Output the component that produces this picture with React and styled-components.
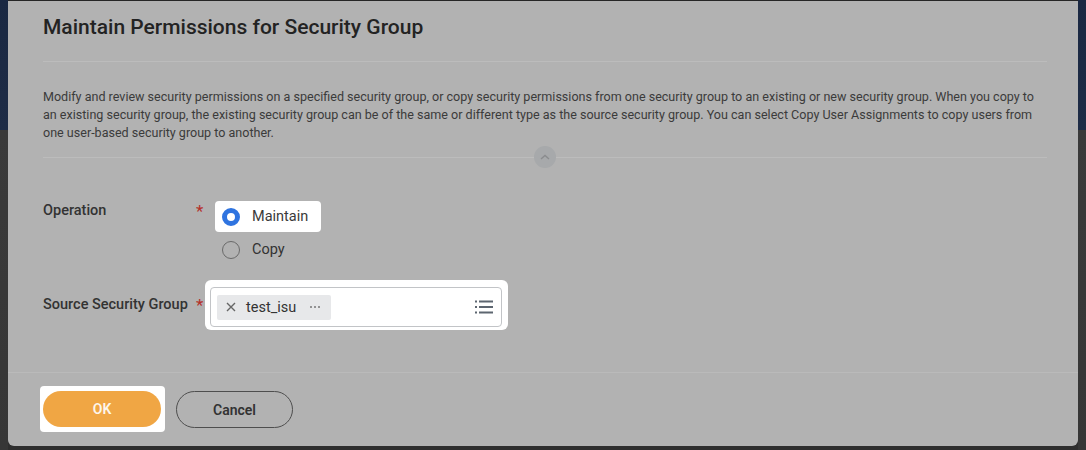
import React from 'react';
import styled, {createGlobalStyle} from "styled-components";

const GlobalStyle = createGlobalStyle`
  html, body {
    margin: 0;
    padding: 0;
    background: #2f2f2f;
  }
  body {
    font-family: Roboto, "Liberation Sans", sans-serif;
  }
`;

const Frame = styled.div`
  display: flex;
  width: 1086px;
  height: 450px;
  background: #2e2e2e;
  overflow: hidden;
`;

const Side = styled.div`
  width: ${p => p.w}px;
  flex-shrink: 0;
  background: linear-gradient(#1a2842 0, #1e2c46 130px, #3a3a3a 130px, #363636 100%);
`;

const Panel = styled.div`
  flex: 1;
  height: 446px;
  display: flex;
  flex-direction: column;
  background: #b2b2b2;
  border-top: 1px solid #262626;
  border-radius: 0 0 6px 6px;
  box-sizing: border-box;
`;

const Body = styled.div`
  flex: 1;
  padding: 0 31px 0 35px;
`;

const Header = styled.div`
  height: 61px;
  padding-top: 14px;
  box-sizing: border-box;
  border-bottom: 1px solid #bcbcbc;
`;

const Title = styled.h1`
  margin: 0;
  font-size: 21px;
  line-height: 24px;
  font-weight: 500;
  color: #232323;
`;

const Description = styled.p`
  margin: 26px 0 4px;
  font-size: 12.55px;
  line-height: 18px;
  color: #3b3b3b;
`;

const Line = styled.span`
  display: block;
  white-space: nowrap;
`;

const Collapse = styled.div`
  display: flex;
  align-items: center;
`;

const Rule = styled.div`
  flex: 1;
  height: 1px;
  background: #bcbcbc;
`;

const Toggle = styled.div`
  width: 22px;
  height: 22px;
  border-radius: 50%;
  background: #a7a9ab;
  display: flex;
  align-items: center;
  justify-content: center;
`;

const Form = styled.div`
  margin-top: 33px;
  display: flex;
  flex-direction: column;
  gap: 15px;
`;

const Field = styled.div`
  display: grid;
  grid-template-columns: 153px 14px 1fr;
  align-items: ${p => p.center ? 'center' : 'start'};
`;

const Label = styled.div`
  font-size: 14.5px;
  line-height: 20px;
  font-weight: 500;
  color: #333;
`;

const Star = styled.div`
  font-size: 17px;
  line-height: 20px;
  color: #b5302a;
`;

const Options = styled.div`
  display: flex;
  flex-direction: column;
  gap: 2px;
`;

const Option = styled.div`
  display: flex;
  align-items: center;
  gap: 12px;
  align-self: flex-start;
  height: 31px;
  box-sizing: border-box;
  margin-left: 5px;
  padding: 0 13px 0 7px;
  border-radius: 4px;
  background: ${p => p.highlight ? '#ffffff' : 'transparent'};
  font-size: 14.5px;
  color: ${p => p.highlight ? '#3a3a3a' : '#333'};
`;

const RadioDot = styled.span`
  width: 18px;
  height: 18px;
  border-radius: 50%;
  box-sizing: border-box;
  border: ${p => p.checked ? '5px solid #2f74e0' : '1.5px solid #6a6a6a'};
  background: ${p => p.checked ? '#fff' : 'transparent'};
`;

const Spot = styled.div`
  margin-left: -5px;
  width: 303px;
  padding: 7px 6px 3px 5px;
  box-sizing: border-box;
  background: #fff;
  border-radius: 6px;
`;

const Input = styled.div`
  height: 40px;
  box-sizing: border-box;
  border: 1px solid #c2c4c7;
  border-radius: 4px;
  display: flex;
  align-items: center;
  justify-content: space-between;
  padding: 0 8px 0 6px;
`;

const Chip = styled.div`
  display: flex;
  align-items: center;
  height: 25px;
  width: 114px;
  box-sizing: border-box;
  padding: 0 10px 0 9px;
  background: #e7e8ea;
  border-radius: 2px;
  font-size: 14.5px;
  color: #333;
`;

const ChipText = styled.span`
  margin-left: 10px;
  flex: 1;
`;

const Footer = styled.div`
  height: 74px;
  box-sizing: border-box;
  border-top: 1px solid #bababa;
  padding: 13px 0 0 32px;
  display: flex;
  align-items: flex-start;
  gap: 11px;
`;

const ButtonSpot = styled.div`
  background: #fff;
  border-radius: 4px;
  padding: 5px 4px 5px 3px;
`;

const Button = styled.button`
  width: ${p => p.primary ? 118 : 117}px;
  height: ${p => p.primary ? 36 : 37}px;
  margin-top: ${p => p.primary ? 0 : 5}px;
  border-radius: 19px;
  font-family: Roboto, "Liberation Sans", sans-serif;
  font-size: 14px;
  font-weight: 600;
  border: ${p => p.primary ? 'none' : '1px solid #4e4e4e'};
  background: ${p => p.primary ? '#f0a644' : 'transparent'};
  color: ${p => p.primary ? '#fdf6ec' : '#333'};
  cursor: pointer;
`;

const Chevron = () => (
    <svg width="10" height="6" viewBox="0 0 10 6">
        <path d="M1 5 L5 1.5 L9 5" fill="none" stroke="#8a8c8e" strokeWidth="1.4"/>
    </svg>
);

const Cross = () => (
    <svg width="10" height="10" viewBox="0 0 10 10">
        <path d="M1 1 L9 9 M9 1 L1 9" stroke="#666" strokeWidth="1.4"/>
    </svg>
);

const Dots = () => (
    <svg width="12" height="4" viewBox="0 0 12 4">
        <circle cx="2" cy="2" r="1" fill="#777"/>
        <circle cx="6" cy="2" r="1" fill="#777"/>
        <circle cx="10" cy="2" r="1" fill="#777"/>
    </svg>
);

const ListIcon = () => (
    <svg width="18" height="14" viewBox="0 0 18 14">
        {[1.5, 7, 12.5].map(y => (
            <g key={y}>
                <rect x="0" y={y - 1} width="2" height="2" fill="#5d6670"/>
                <rect x="4" y={y - 1} width="14" height="2" fill="#5d6670"/>
            </g>
        ))}
    </svg>
);

const App = () => {
    return (
        <>
            <GlobalStyle/>
            <Frame>
                <Side w={8}/>
                <Panel>
                    <Body>
                        <Header>
                            <Title>Maintain Permissions for Security Group</Title>
                        </Header>
                        <Description>
                            <Line>Modify and review security permissions on a specified security group, or copy security permissions from one security group to an existing or new security group. When you copy to</Line>
                            <Line>an existing security group, the existing security group can be of the same or different type as the source security group. You can select Copy User Assignments to copy users from</Line>
                            <Line>one user-based security group to another.</Line>
                        </Description>
                        <Collapse>
                            <Rule/>
                            <Toggle><Chevron/></Toggle>
                            <Rule/>
                        </Collapse>
                        <Form>
                            <Field>
                                <Label>Operation</Label>
                                <Star>*</Star>
                                <Options>
                                    <Option highlight><RadioDot checked/>Maintain</Option>
                                    <Option><RadioDot/>Copy</Option>
                                </Options>
                            </Field>
                            <Field center>
                                <Label>Source Security Group</Label>
                                <Star>*</Star>
                                <Spot>
                                    <Input>
                                        <Chip>
                                            <Cross/>
                                            <ChipText>test_isu</ChipText>
                                            <Dots/>
                                        </Chip>
                                        <ListIcon/>
                                    </Input>
                                </Spot>
                            </Field>
                        </Form>
                    </Body>
                    <Footer>
                        <ButtonSpot>
                            <Button primary type="button">OK</Button>
                        </ButtonSpot>
                        <Button type="button">Cancel</Button>
                    </Footer>
                </Panel>
                <Side w={8}/>
            </Frame>
        </>
    );
};

export default App;
